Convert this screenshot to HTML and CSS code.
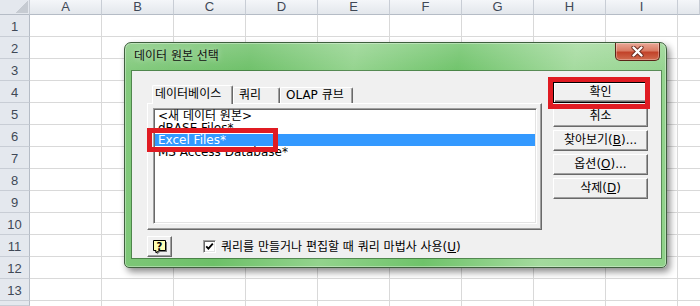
FILE: index.html
```html
<!DOCTYPE html>
<html lang="ko">
<head>
  <meta charset="UTF-8" />
  <title>데이터 원본 선택</title>
  <link rel="stylesheet" href="styles.css">
</head>
<body>

<div class="sheet">
  <div class="corner"></div>
  <div class="col-head">A</div>
  <div class="col-head">B</div>
  <div class="col-head">C</div>
  <div class="col-head">D</div>
  <div class="col-head">E</div>
  <div class="col-head">F</div>
  <div class="col-head">G</div>
  <div class="col-head">H</div>
  <div class="col-head">I</div>
  <div class="col-head"></div>

  <div class="cells"></div>

  <div class="row-head">1</div>
  <div class="row-head">2</div>
  <div class="row-head">3</div>
  <div class="row-head">4</div>
  <div class="row-head">5</div>
  <div class="row-head">6</div>
  <div class="row-head">7</div>
  <div class="row-head">8</div>
  <div class="row-head">9</div>
  <div class="row-head">10</div>
  <div class="row-head">11</div>
  <div class="row-head">12</div>
  <div class="row-head">13</div>
  <div class="row-head"></div>
</div>

<div class="dialog">
  <div class="titlebar">
    <span class="title">데이터 원본 선택</span>
    <div class="close">
      <svg width="13" height="11" viewBox="0 0 13 11">
        <path d="M2.5 1.5l8 8M10.5 1.5l-8 8" stroke="#6a2a1e" stroke-width="4.2" stroke-linecap="round" fill="none"/>
        <path d="M2.5 1.5l8 8M10.5 1.5l-8 8" stroke="#fff" stroke-width="2.4" stroke-linecap="round" fill="none"/>
      </svg>
    </div>
  </div>

  <div class="client">
    <div class="main">
      <div class="tab-area">
        <div class="tabs">
          <div class="tab active tab-db">데이터베이스</div>
          <div class="tab tab-query">쿼리</div>
          <div class="tab tab-olap">OLAP 큐브</div>
        </div>
        <div class="panel">
          <div class="listbox">
            <div class="item">&lt;새 데이터 원본&gt;</div>
            <div class="item">dBASE Files*</div>
            <div class="item selected">Excel Files*</div>
            <div class="item">MS Access Database*</div>
          </div>
        </div>
      </div>

      <div class="buttons">
        <div class="btn btn-default">확인</div>
        <div class="btn">취소</div>
        <div class="btn">찾아보기(<u>B</u>)...</div>
        <div class="btn">옵션(<u>O</u>)...</div>
        <div class="btn">삭제(<u>D</u>)</div>
      </div>
    </div>

    <div class="footer">
      <div class="btn help">
        <svg width="16" height="16" viewBox="0 0 16 16">
          <path d="M3 3h12v10H8l-3 2.5V13H3z" fill="#7a7a7a"/>
          <path d="M1.5 1.5h12v10h-6.5l-3 2.5v-2.5h-2.5z" fill="#ffffb4" stroke="#000"/>
          <text x="7.5" y="10.5" text-anchor="middle" font-family="DejaVu Sans" font-weight="bold" font-size="10">?</text>
        </svg>
      </div>
      <label class="check">
        <span class="box">
          <svg width="9" height="9" viewBox="0 0 9 9">
            <path d="M1.2 4.3l2.2 2.3 4.4-5" stroke="#000" stroke-width="1.8" fill="none"/>
          </svg>
        </span>
        <span>쿼리를 만들거나 편집할 때 쿼리 마법사 사용(<u>U</u>)</span>
      </label>
    </div>
  </div>
</div>

<div class="mark mark-ok"></div>
<div class="mark mark-excel"></div>

</body>
</html>
```

FILE: styles.css
```css
* {
  box-sizing: border-box;
}

html, body {
  margin: 0;
  padding: 0;
}

body {
  width: 700px;
  height: 306px;
  overflow: hidden;
  position: relative;
  background: #fff;
  font-family: "Liberation Sans", sans-serif;
}

/* 시트 */
.sheet {
  display: grid;
  grid-template-columns: 30px repeat(9, 72px) 1fr;
  grid-template-rows: 15px repeat(13, 22px) 1fr;
  height: 306px;
  overflow: hidden;
}

.corner {
  position: relative;
  background: #e4e8ee;
  border-right: 1px solid #c8cdd5;
  border-bottom: 1px solid #b5bcc6;
}

.corner::after {
  content: "";
  position: absolute;
  right: 1px;
  bottom: 1px;
  width: 13px;
  height: 13px;
  background: linear-gradient(to bottom right, transparent 50%, #c6cbd2 50%);
}

.col-head {
  background: linear-gradient(#f4f6f9, #e3e7ec);
  border-right: 1px solid #c8cdd5;
  border-bottom: 1px solid #b5bcc6;
  text-align: center;
  font-size: 13px;
  line-height: 14px;
  color: #3f4856;
}

.row-head {
  grid-column: 1;
  background: #e4e8ee;
  border-right: 1px solid #b5bcc6;
  border-bottom: 1px solid #c8cdd5;
  text-align: center;
  font-size: 13px;
  line-height: 23px;
  color: #3f4856;
}

.cells {
  grid-column: 2 / -1;
  grid-row: 2 / -1;
  background-image:
    repeating-linear-gradient(to right, transparent 0 71px, #d9d9d9 71px 72px),
    repeating-linear-gradient(to bottom, transparent 0 21px, #d9d9d9 21px 22px);
}

/* 대화 상자 */
.dialog {
  position: absolute;
  left: 124px;
  top: 42px;
  width: 543px;
  height: 226px;
  display: flex;
  flex-direction: column;
  border: 1px solid #3f5f3e;
  border-radius: 7px 7px 5px 5px;
  background:
    linear-gradient(rgba(255, 255, 255, 0.18), rgba(255, 255, 255, 0) 30px),
    linear-gradient(100deg, #84ca7e, #6dc068 22%, #93d38d 40%, #6fc36a 58%, #a3da9d 78%, #8ed188);
  box-shadow: inset 0 0 0 1px rgba(255, 255, 255, 0.35), 3px 4px 7px rgba(0, 0, 0, 0.45);
  font-family: "DejaVu Sans", "Noto Sans CJK KR", sans-serif;
  font-size: 12px;
  color: #000;
}

.titlebar {
  display: flex;
  height: 28px;
}

.title {
  padding-left: 9px;
  line-height: 27px;
  color: #111;
  text-shadow: 0 0 6px rgba(255, 255, 255, 0.6);
}

.close {
  margin: 0 6px 0 auto;
  width: 45px;
  height: 18px;
  display: flex;
  align-items: center;
  justify-content: center;
  border: 1px solid #5b2418;
  border-top: none;
  border-radius: 0 0 5px 5px;
  background: linear-gradient(#eaa796, #d97c64 45%, #c2432a 55%, #d06b4e);
  box-shadow: inset 0 0 0 1px rgba(255, 255, 255, 0.3);
}

.client {
  flex: 1;
  margin: 0 5px 9px 7px;
  padding: 11px 0 0 15px;
  background: #f0f0f0;
  box-shadow: 0 0 0 1px rgba(40, 80, 40, 0.55);
}

.main {
  display: flex;
  align-items: flex-start;
}

.tab-area {
  width: 395px;
  margin-top: 3px;
}

.tabs {
  position: relative;
  z-index: 1;
  display: flex;
  align-items: flex-end;
  height: 18px;
  padding-left: 5px;
}

.tab {
  height: 16px;
  padding-left: 5px;
  line-height: 14px;
  white-space: nowrap;
  background: #f0f0f0;
  border: 1px solid #fff;
  border-right-color: #696969;
  border-bottom: none;
  border-radius: 2px 2px 0 0;
  box-shadow: inset -1px 0 #a0a0a0;
}

.tab.active {
  height: 19px;
  margin-bottom: -1px;
  padding-left: 2px;
  line-height: 17px;
}

.tab-db { width: 81px; }
.tab-query { width: 47px; }
.tab-olap { width: 73px; }

.panel {
  height: 127px;
  padding: 4px 4px 0 5px;
  border: 1px solid;
  border-color: #fff #696969 #696969 #fff;
  box-shadow: inset -1px -1px #a0a0a0;
}

.listbox {
  height: 116px;
  padding: 1px;
  overflow: hidden;
  background: #fff;
  border: 1px solid;
  border-color: #a0a0a0 #fff #fff #a0a0a0;
  box-shadow: inset 1px 1px #696969, inset -1px -1px #e3e3e3;
}

.item {
  height: 12px;
  padding-left: 3px;
  line-height: 12px;
  white-space: nowrap;
}

.item.selected {
  background: #3399ff;
  color: #fff;
}

.buttons {
  display: flex;
  flex-direction: column;
  gap: 3px;
  width: 95px;
  margin-left: 11px;
}

.btn {
  height: 21px;
  line-height: 19px;
  text-align: center;
  white-space: nowrap;
  background: #f0f0f0;
  border: 1px solid;
  border-color: #fff #696969 #696969 #fff;
  box-shadow: inset -1px -1px #a0a0a0;
}

.btn-default {
  border-color: #000;
  box-shadow: inset 1px 1px #fff, inset -1px -1px #696969, inset -2px -2px #a0a0a0;
}

.footer {
  display: flex;
  align-items: center;
  height: 21px;
  margin-top: 6px;
}

.help {
  width: 25px;
  display: flex;
  align-items: center;
  justify-content: center;
}

.check {
  display: flex;
  align-items: center;
  gap: 5px;
  margin-left: 31px;
  line-height: 14px;
}

.box {
  width: 13px;
  height: 13px;
  display: flex;
  align-items: center;
  justify-content: center;
  background: #fff;
  border: 1px solid;
  border-color: #a0a0a0 #fff #fff #a0a0a0;
  box-shadow: inset 1px 1px #696969, inset -1px -1px #e3e3e3;
}

/* 빨간 표시 */
.mark {
  position: absolute;
  border: 5px solid #e01b22;
}

.mark-ok {
  left: 548px;
  top: 77px;
  width: 102px;
  height: 32px;
}

.mark-excel {
  left: 147px;
  top: 128px;
  width: 131px;
  height: 24px;
}
```
